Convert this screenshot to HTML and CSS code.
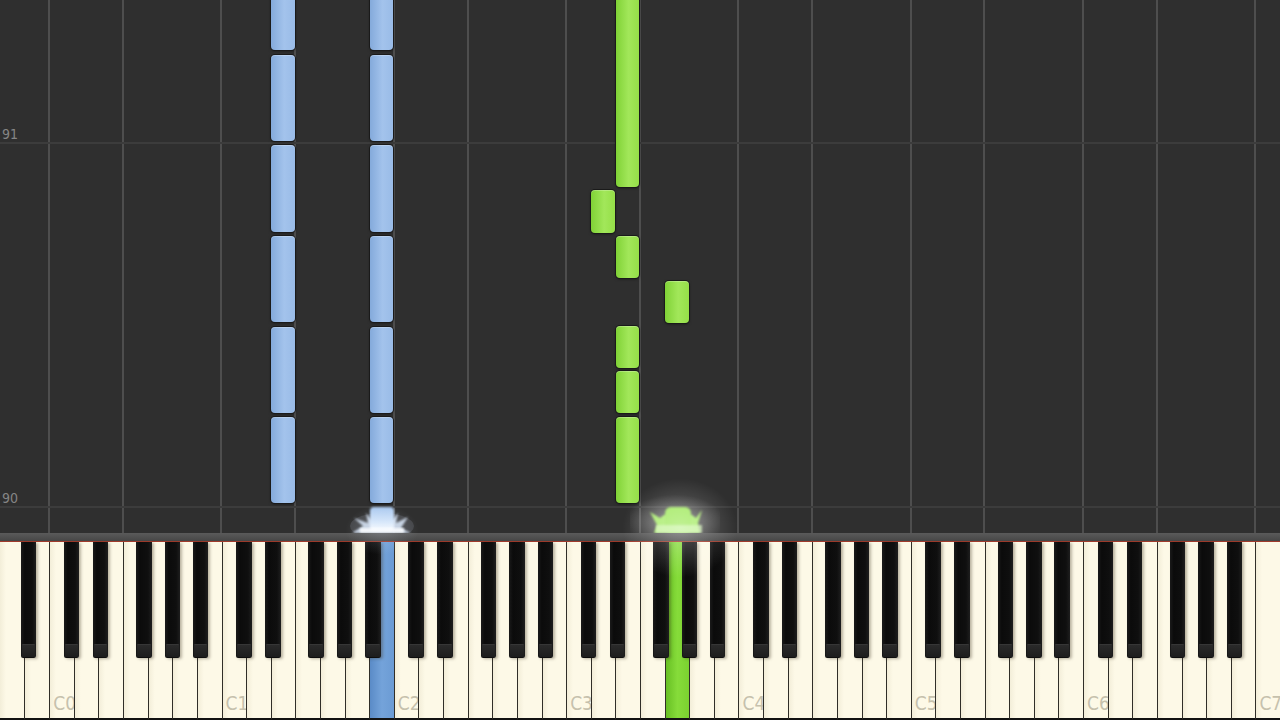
FILE: index.html
```html
<!DOCTYPE html>
<html>
<head>
<meta charset="utf-8">
<link rel="stylesheet" href="styles.css">
</head>
<body>
<div class="screen">
  <div class="roll">
    <div class="lanes">
      <div class="lane"></div><div class="lane"></div><div class="lane edge"></div><div class="lane"></div><div class="lane"></div><div class="lane edge"></div><div class="lane"></div><div class="lane"></div><div class="lane"></div><div class="lane edge"></div>
      <div class="lane"></div><div class="lane"></div><div class="lane edge"></div><div class="lane"></div><div class="lane"></div><div class="lane"></div><div class="lane edge"></div><div class="lane"></div><div class="lane"></div><div class="lane edge"></div>
      <div class="lane"></div><div class="lane"></div><div class="lane"></div><div class="lane edge"></div><div class="lane"></div><div class="lane"></div><div class="lane edge"></div><div class="lane"></div><div class="lane"></div><div class="lane"></div>
      <div class="lane edge"></div><div class="lane"></div><div class="lane"></div><div class="lane edge"></div><div class="lane"></div><div class="lane"></div><div class="lane"></div><div class="lane edge"></div><div class="lane"></div><div class="lane"></div>
      <div class="lane edge"></div><div class="lane"></div><div class="lane"></div><div class="lane"></div><div class="lane edge"></div><div class="lane"></div><div class="lane"></div><div class="lane edge"></div><div class="lane"></div><div class="lane"></div>
      <div class="lane"></div><div class="lane edge"></div>
    </div>

    <div class="measure" style="top:142px"><span>91</span></div>
    <div class="measure" style="top:506px"><span>90</span></div>

    <div class="note blue" style="left:271.3px;top:-40px;height:90px"></div>
    <div class="note blue" style="left:271.3px;top:55px;height:86px"></div>
    <div class="note blue" style="left:271.3px;top:145px;height:87px"></div>
    <div class="note blue" style="left:271.3px;top:236px;height:86px"></div>
    <div class="note blue" style="left:271.3px;top:327px;height:86px"></div>
    <div class="note blue" style="left:271.3px;top:417px;height:86px"></div>

    <div class="note blue" style="left:369.7px;top:-40px;height:90px"></div>
    <div class="note blue" style="left:369.7px;top:55px;height:86px"></div>
    <div class="note blue" style="left:369.7px;top:145px;height:87px"></div>
    <div class="note blue" style="left:369.7px;top:236px;height:86px"></div>
    <div class="note blue" style="left:369.7px;top:327px;height:86px"></div>
    <div class="note blue" style="left:369.7px;top:417px;height:86px"></div>

    <div class="note green" style="left:615.9px;top:-40px;height:227px"></div>
    <div class="note green" style="left:591.3px;top:190px;height:43px"></div>
    <div class="note green" style="left:615.9px;top:236px;height:42px"></div>
    <div class="note green" style="left:665.1px;top:281px;height:42px"></div>
    <div class="note green" style="left:615.9px;top:326px;height:42px"></div>
    <div class="note green" style="left:615.9px;top:371px;height:42px"></div>
    <div class="note green" style="left:615.9px;top:417px;height:86px"></div>

    <svg class="burst burst-blue" viewBox="0 0 80 43" width="80" height="43">
      <defs>
        <filter id="bb" x="-20%" y="-20%" width="140%" height="140%"><feGaussianBlur stdDeviation="0.8"/></filter>
        <linearGradient id="bg1" x1="0" y1="0" x2="0" y2="1">
          <stop offset="0" stop-color="#a9c8ef"/>
          <stop offset="0.6" stop-color="#d4e5f9"/>
          <stop offset="1" stop-color="#ffffff"/>
        </linearGradient>
      </defs>
      <ellipse cx="42" cy="36" rx="32" ry="13" fill="#dceaff" opacity="0.12"/>
      <polygon filter="url(#bb)" fill="#dce9fb" opacity="0.85" points="12,43 23,36 14,28 28,33 26,23 32,30 33,19 38,28 42,19 46,28 50,20 52,30 58,23 56,33 68,27 61,38 71,43"/>
      <rect x="30" y="17" width="24" height="24" rx="4" fill="url(#bg1)" filter="url(#bb)"/>
      <rect x="20" y="38" width="44" height="5" fill="#ffffff" opacity="0.85" filter="url(#bb)"/>
    </svg>

    <svg class="burst burst-green" viewBox="0 0 90 48" width="90" height="48">
      <defs>
        <filter id="gb" x="-20%" y="-20%" width="140%" height="140%"><feGaussianBlur stdDeviation="0.8"/></filter>
        <radialGradient id="gh" cx="0.5" cy="0.75" r="0.55">
          <stop offset="0" stop-color="#ffffff" stop-opacity="0.4"/>
          <stop offset="1" stop-color="#ffffff" stop-opacity="0"/>
        </radialGradient>
      </defs>
      <rect x="0" y="0" width="90" height="48" fill="url(#gh)"/>
      <polygon filter="url(#gb)" fill="#a9ec6c" points="24,48 27,40 20,27 30,33 34,30 62,30 66,33 72,25 68,38 70,48"/>
      <rect x="35" y="22" width="26" height="26" rx="6" fill="#a3ea62" filter="url(#gb)"/>
      <rect x="26" y="40" width="46" height="8" fill="#d6f7b8" opacity="0.7" filter="url(#gb)"/>
    </svg>
  </div>

  <div class="band"></div>
  <div class="rail"></div>

  <div class="keyboard">
    <div class="group partial">
      <div class="white"></div><div class="white"></div>
      <div class="black as"></div>
    </div>
    <div class="group oct">
      <div class="white"><span class="lbl">C0</span></div><div class="white"></div><div class="white"></div><div class="white"></div><div class="white"></div><div class="white"></div><div class="white"></div>
      <div class="black cs"></div><div class="black ds"></div><div class="black fs"></div><div class="black gs"></div><div class="black as"></div>
    </div>
    <div class="group oct">
      <div class="white"><span class="lbl">C1</span></div><div class="white"></div><div class="white"></div><div class="white"></div><div class="white"></div><div class="white"></div><div class="white hit-blue"></div>
      <div class="black cs"></div><div class="black ds"></div><div class="black fs"></div><div class="black gs"></div><div class="black as"></div>
    </div>
    <div class="group oct">
      <div class="white"><span class="lbl">C2</span></div><div class="white"></div><div class="white"></div><div class="white"></div><div class="white"></div><div class="white"></div><div class="white"></div>
      <div class="black cs"></div><div class="black ds"></div><div class="black fs"></div><div class="black gs"></div><div class="black as"></div>
    </div>
    <div class="group oct">
      <div class="white"><span class="lbl">C3</span></div><div class="white"></div><div class="white"></div><div class="white"></div><div class="white hit-green"></div><div class="white"></div><div class="white"></div>
      <div class="black cs"></div><div class="black ds"></div><div class="black fs"></div><div class="black gs"></div><div class="black as"></div>
    </div>
    <div class="group oct">
      <div class="white"><span class="lbl">C4</span></div><div class="white"></div><div class="white"></div><div class="white"></div><div class="white"></div><div class="white"></div><div class="white"></div>
      <div class="black cs"></div><div class="black ds"></div><div class="black fs"></div><div class="black gs"></div><div class="black as"></div>
    </div>
    <div class="group oct">
      <div class="white"><span class="lbl">C5</span></div><div class="white"></div><div class="white"></div><div class="white"></div><div class="white"></div><div class="white"></div><div class="white"></div>
      <div class="black cs"></div><div class="black ds"></div><div class="black fs"></div><div class="black gs"></div><div class="black as"></div>
    </div>
    <div class="group oct">
      <div class="white"><span class="lbl">C6</span></div><div class="white"></div><div class="white"></div><div class="white"></div><div class="white"></div><div class="white"></div><div class="white"></div>
      <div class="black cs"></div><div class="black ds"></div><div class="black fs"></div><div class="black gs"></div><div class="black as"></div>
    </div>
    <div class="group last">
      <div class="white"><span class="lbl">C7</span></div>
    </div>
  </div>

  <div class="halo halo-green"></div>
  <div class="halo halo-blue"></div>
</div>
</body>
</html>
```

FILE: styles.css
```css
* {
  box-sizing: border-box;
  margin: 0;
  padding: 0;
}

html, body {
  width: 1280px;
  height: 720px;
  overflow: hidden;
  background: #2f2f2f;
  font-family: "DejaVu Sans Condensed", "DejaVu Sans", sans-serif;
}

.screen {
  position: relative;
  display: flex;
  flex-direction: column;
  width: 1280px;
  height: 720px;
}

/* ---------- note roll ---------- */
.roll {
  position: relative;
  height: 533px;
  flex: none;
  background: #2f2f2f;
  overflow: hidden;
}

.lanes {
  display: flex;
  height: 100%;
}

.lane {
  flex: 1 1 0;
}

.lane.edge {
  box-shadow: -1px 0 0 #4e4e4e, inset 1px 0 0 #4e4e4e;
}

.measure {
  position: absolute;
  left: 0;
  right: 0;
  height: 2px;
  background: #3c3c3c;
}

.measure span {
  position: absolute;
  left: 2px;
  bottom: 3px;
  font-size: 14px;
  line-height: 14px;
  color: #858585;
}

.note {
  position: absolute;
  width: 23.6px;
  border-radius: 4px;
  box-shadow: 0 0 0 1px #1a1a1a, 0 1px 3px rgba(0, 0, 0, 0.55), inset 0 1px 0 rgba(255, 255, 255, 0.25);
}

.note.blue {
  background: linear-gradient(to right, #84aadb 0%, #a3c3ec 55%, #99bbe7 100%);
}

.note.green {
  background: linear-gradient(to right, #80d236 0%, #a2e75a 55%, #95df48 100%);
}

.burst {
  position: absolute;
  display: block;
}

.burst-blue {
  left: 340px;
  top: 490px;
}

.burst-green {
  left: 630px;
  top: 485px;
}

/* ---------- band & rail ---------- */
.band {
  height: 8px;
  flex: none;
  background: linear-gradient(#5a5a5a, #464646);
}

.rail {
  height: 1px;
  flex: none;
  background: #a03a2c;
}

/* ---------- keyboard ---------- */
.keyboard {
  display: flex;
  height: 178px;
  flex: none;
  background: #1d1d1d;
}

.group {
  position: relative;
  display: flex;
  flex-basis: 0;
}

.group.partial { flex-grow: 2; }
.group.oct { flex-grow: 7; }
.group.last { flex-grow: 1; }

.white {
  position: relative;
  flex: 1 1 0;
  background: linear-gradient(to right, #f3eed9 0%, #fdf9e7 25%, #fdf9e7 100%);
  border-left: 1.5px solid #302e28;
  border-bottom: 2px solid #121212;
}

.group.partial .white:first-child {
  border-left: none;
}

.white.hit-blue {
  background: linear-gradient(to right, #5a8bc7 0%, #74a3da 50%, #6b9bd4 100%);
}

.white.hit-green {
  background: linear-gradient(to right, #68c024 0%, #86dc3a 50%, #7bd230 100%);
}

.lbl {
  position: absolute;
  left: 3px;
  bottom: 5px;
  font-size: 19px;
  line-height: 19px;
  color: #c6c1ad;
}

.black {
  position: absolute;
  top: 0;
  width: 9%;
  height: 116px;
  z-index: 2;
  background: linear-gradient(to right, #1a1a1a 0%, #0b0b0b 25%, #0f0f0f 75%, #1e1e1e 100%);
  border-radius: 0 0 2px 2px;
  box-shadow: 2px 1px 3px rgba(60, 50, 30, 0.35);
}

.black::after {
  content: "";
  position: absolute;
  left: 1px;
  right: 1px;
  bottom: 1px;
  height: 12px;
  background: linear-gradient(#2a2a2a, #1d1d1d);
  border-top: 1px solid #363636;
  border-radius: 1px;
}

.cs { left: 8.44%; }
.ds { left: 25.22%; }
.fs { left: 50.41%; }
.gs { left: 66.95%; }
.as { left: 83.37%; }

.group.partial .as {
  left: 41.74%;
  width: 31.49%;
}

/* ---------- glow overlays ---------- */
.halo {
  position: absolute;
  pointer-events: none;
  z-index: 5;
}

.halo-green {
  left: 622px;
  top: 478px;
  width: 116px;
  height: 100px;
  background: radial-gradient(ellipse at center, rgba(255, 255, 255, 0.32) 0%, rgba(255, 255, 255, 0.12) 40%, rgba(255, 255, 255, 0) 70%);
}

.halo-blue {
  left: 345px;
  top: 505px;
  width: 74px;
  height: 50px;
  background: radial-gradient(ellipse at center, rgba(220, 235, 255, 0.2) 0%, rgba(220, 235, 255, 0) 70%);
}
```
